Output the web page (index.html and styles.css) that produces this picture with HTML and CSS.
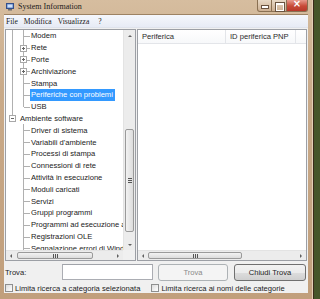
FILE: index.html
```html
<!DOCTYPE html>
<html lang="it">
<head>
	<meta charset="UTF-8" />
	<title>System Information</title>
	<link rel="stylesheet" href="styles.css">
</head>
<body>

<div class="window">

	<!-- barra del titolo -->
	<div class="titlebar">
		<svg class="app-icon" width="8" height="8" viewBox="0 0 8 8">
			<rect x="0.5" y="0.5" width="7" height="5" fill="#5b86c8" stroke="#34508a"/>
			<rect x="1.5" y="1.5" width="5" height="3" fill="#cfe0f7"/>
			<rect x="2" y="6" width="4" height="1.5" fill="#6d6d6d"/>
		</svg>
		<span class="title">System Information</span>
		<div class="controls">
			<span class="ctl min"></span>
			<span class="ctl max"></span>
			<span class="ctl close"></span>
		</div>
	</div>

	<div class="client">
		<div class="menubar">
			<span>File</span>
			<span>Modifica</span>
			<span>Visualizza</span>
			<span>?</span>
		</div>

		<div class="panes">
			<!-- albero delle categorie -->
			<div class="tree-pane">
				<div class="tree">
					<div class="row"><i class="g0 v"></i><i class="g1 tee"></i><span class="label">Modem</span></div>
					<div class="row"><i class="g0 v"></i><i class="g1 tee"><b class="box plus"></b></i><span class="label">Rete</span></div>
					<div class="row"><i class="g0 v"></i><i class="g1 tee"><b class="box plus"></b></i><span class="label">Porte</span></div>
					<div class="row"><i class="g0 v"></i><i class="g1 tee"><b class="box plus"></b></i><span class="label">Archiviazione</span></div>
					<div class="row"><i class="g0 v"></i><i class="g1 tee"></i><span class="label">Stampa</span></div>
					<div class="row"><i class="g0 v"></i><i class="g1 tee"></i><span class="label selected">Periferiche con problemi</span></div>
					<div class="row"><i class="g0 v"></i><i class="g1 ell"></i><span class="label">USB</span></div>
					<div class="row"><i class="g0 top"><b class="box minus"></b></i><span class="label root">Ambiente software</span></div>
					<div class="row"><i class="g0"></i><i class="g1 tee"></i><span class="label">Driver di sistema</span></div>
					<div class="row"><i class="g0"></i><i class="g1 tee"></i><span class="label">Variabili d'ambiente</span></div>
					<div class="row"><i class="g0"></i><i class="g1 tee"></i><span class="label">Processi di stampa</span></div>
					<div class="row"><i class="g0"></i><i class="g1 tee"></i><span class="label">Connessioni di rete</span></div>
					<div class="row"><i class="g0"></i><i class="g1 tee"></i><span class="label">Attività in esecuzione</span></div>
					<div class="row"><i class="g0"></i><i class="g1 tee"></i><span class="label">Moduli caricati</span></div>
					<div class="row"><i class="g0"></i><i class="g1 tee"></i><span class="label">Servizi</span></div>
					<div class="row"><i class="g0"></i><i class="g1 tee"></i><span class="label">Gruppi programmi</span></div>
					<div class="row"><i class="g0"></i><i class="g1 tee"></i><span class="label">Programmi ad esecuzione automatica</span></div>
					<div class="row"><i class="g0"></i><i class="g1 tee"></i><span class="label">Registrazioni OLE</span></div>
					<div class="row"><i class="g0"></i><i class="g1 tee"></i><span class="label">Segnalazione errori di Windows</span></div>
				</div>

				<div class="vscroll">
					<span class="arrow up"></span>
					<span class="vtrack">
						<span class="vthumb"><span class="grip-h"></span></span>
					</span>
					<span class="arrow down"></span>
				</div>

				<div class="hscroll">
					<span class="arrow left"></span>
					<span class="htrack">
						<span class="hthumb tree-thumb"><span class="grip-v"></span></span>
					</span>
					<span class="arrow right"></span>
				</div>
				<div class="corner"></div>
			</div>

			<!-- elenco periferiche -->
			<div class="list-pane">
				<div class="list-header">
					<span class="col col-name">Periferica</span>
					<span class="col col-id">ID periferica PNP</span>
				</div>
				<div class="list-body"></div>
				<div class="hscroll">
					<span class="arrow left"></span>
					<span class="htrack">
						<span class="hthumb list-thumb"><span class="grip-v"></span></span>
					</span>
					<span class="arrow right"></span>
				</div>
			</div>
		</div>

		<div class="find-row">
			<label class="find-label" for="find">Trova:</label>
			<input class="find-input" id="find" type="text">
			<button class="btn" type="button" disabled>Trova</button>
			<button class="btn" type="button">Chiudi Trova</button>
		</div>

		<div class="check-row">
			<label class="check"><span class="checkbox"></span>Limita ricerca a categoria selezionata</label>
			<label class="check"><span class="checkbox"></span>Limita ricerca ai nomi delle categorie</label>
		</div>
	</div>
</div>

</body>
</html>
```

FILE: styles.css
```css
* {
	box-sizing: border-box;
}

body {
	margin: 0;
	width: 320px;
	height: 299px;
	overflow: hidden;
	background: linear-gradient(90deg, #2e3a1b, #46562a);
	font-family: 'Liberation Sans', Arial, sans-serif;
	font-size: 7.6px;
	color: #1e1e1e;
}

/* cornice della finestra */
.window {
	width: 314px;
	height: 299px;
	display: flex;
	flex-direction: column;
	padding: 0 5px 6px 4px;
	background: linear-gradient(180deg, #d6bd9f 0%, #c9aa89 30%, #c19f7c 100%);
	border-right: 1px solid #3b2c1a;
	box-shadow: inset -1px 0 0 #e2cfb6;
}

.titlebar {
	height: 14px;
	display: flex;
	align-items: center;
	margin-left: -1px;
}

.app-icon {
	margin-right: 4px;
	margin-left: 3px;
}

.title {
	font-family: 'Liberation Serif', 'Times New Roman', serif;
	font-size: 8px;
	color: #1a1a1a;
	margin-top: -1px;
}

.controls {
	margin-left: auto;
	margin-right: 0;
	align-self: flex-start;
	display: flex;
}

.ctl {
	display: block;
	height: 12px;
	border: 1px solid #8a7052;
	border-top: none;
	position: relative;
}

.ctl.min {
	width: 15px;
	border-radius: 0 0 0 3px;
	background: linear-gradient(#e8d9c6, #cdb092);
}

.ctl.max {
	width: 15px;
	border-left: none;
	background: linear-gradient(#e8d9c6, #cdb092);
}

.ctl.close {
	width: 21px;
	border-left: none;
	border-radius: 0 0 3px 0;
	background: linear-gradient(#e79a8c, #c74a37 55%, #b8382a);
}

.ctl.min::after {
	content: '';
	position: absolute;
	left: 4px;
	top: 6px;
	width: 6px;
	height: 2px;
	background: #fff;
	box-shadow: 0 0 0 1px #6a5440;
}

.ctl.max::after {
	content: '';
	position: absolute;
	left: 4px;
	top: 3px;
	width: 6px;
	height: 5px;
	border: 1px solid #fff;
	border-top-width: 2px;
	box-shadow: 0 0 0 1px #6a5440;
}

.ctl.close::after {
	content: '×';
	position: absolute;
	left: 0;
	right: 0;
	top: -2px;
	text-align: center;
	font-family: 'DejaVu Sans', sans-serif;
	font-weight: bold;
	font-size: 10px;
	color: #fff;
}

/* area client */
.client {
	flex: 1;
	display: flex;
	flex-direction: column;
	background: #f0f0f0;
	border-top: 1px solid #9d8263;
}

.menubar {
	height: 13px;
	display: flex;
	align-items: center;
	padding-left: 2px;
	gap: 6px;
	background: linear-gradient(#f5f7fc, #e7ebf5);
	border-bottom: 1px solid #dfe3ec;
	font-family: 'Liberation Serif', 'Times New Roman', serif;
	font-size: 7.6px;
	color: #1a1a1a;
}

.menubar span:last-child {
	margin-left: 3px;
}

.panes {
	height: 232px;
	display: flex;
	gap: 1px;
	padding: 0 1px;
	margin-top: 1px;
}

.tree-pane {
	width: 131px;
	display: grid;
	grid-template-columns: 1fr 12px;
	grid-template-rows: 1fr 10px;
	background: #fff;
	border: 1px solid #9c9fa5;
	overflow: hidden;
}

.tree {
	overflow: hidden;
	white-space: nowrap;
}

.row {
	height: 11.8px;
	display: flex;
	align-items: stretch;
}

.row i {
	display: flex;
	align-items: center;
	flex: none;
}

.g0 {
	width: 11px;
	margin-left: 1px;
}

.g1 {
	width: 12px;
}

/* linee dell'albero */
.v {
	background: linear-gradient(#b0b0b0, #b0b0b0) 5px 0 / 1px 100% no-repeat;
}

.top {
	background: linear-gradient(#b0b0b0, #b0b0b0) 5px 0 / 1px 50% no-repeat;
}

.tee {
	background:
		linear-gradient(#b0b0b0, #b0b0b0) 5px 0 / 1px 100% no-repeat,
		linear-gradient(#b0b0b0, #b0b0b0) 6px 6px / 6px 1px no-repeat;
}

.ell {
	background:
		linear-gradient(#b0b0b0, #b0b0b0) 5px 0 / 1px 6px no-repeat,
		linear-gradient(#b0b0b0, #b0b0b0) 6px 6px / 6px 1px no-repeat;
}

.box {
	display: block;
	width: 7px;
	height: 7px;
	margin-left: 2px;
	margin-top: 1px;
	border: 1px solid #a8a8a8;
	background:
		linear-gradient(#666, #666) 1px 2px / 3px 1px no-repeat,
		#fff;
}

.box.plus {
	background:
		linear-gradient(#666, #666) 1px 2px / 3px 1px no-repeat,
		linear-gradient(#666, #666) 2px 1px / 1px 3px no-repeat,
		#fff;
}

.label {
	display: flex;
	align-items: center;
	padding: 0 1px;
	color: #222;
}

.label.root {
	margin-left: 1px;
}

.label.selected {
	background: #3399ff;
	color: #fff;
	padding-right: 2px;
}

/* barre di scorrimento */
.vscroll {
	display: flex;
	flex-direction: column;
	background: #ececec;
	border-left: 1px solid #e3e3e3;
}

.arrow {
	flex: none;
	display: block;
	width: 11px;
	height: 11px;
	position: relative;
}

.arrow::after {
	content: '';
	position: absolute;
	left: 50%;
	top: 50%;
	width: 0;
	height: 0;
	border: 2px solid transparent;
}

.arrow.up::after {
	margin: -3px 0 0 -2px;
	border-bottom: 2px solid #606060;
}

.arrow.down::after {
	margin: -1px 0 0 -2px;
	border-top: 2px solid #606060;
}

.arrow.left::after {
	margin: -2px 0 0 -3px;
	border-right: 2px solid #606060;
}

.arrow.right::after {
	margin: -2px 0 0 -1px;
	border-left: 2px solid #606060;
}

.vtrack {
	flex: 1;
	display: flex;
	flex-direction: column;
	padding-top: 88px;
	padding-bottom: 7px;
}

.vthumb {
	flex: 1;
	margin: 0 1px;
	display: flex;
	align-items: center;
	justify-content: center;
	border: 1px solid #9a9a9a;
	border-radius: 2px;
	background: linear-gradient(90deg, #f2f2f2, #dcdcdc);
}

.grip-h {
	width: 4px;
	height: 5px;
	background: repeating-linear-gradient(#555 0 1px, transparent 1px 2px);
}

.hscroll {
	display: flex;
	align-items: stretch;
	background: #ececec;
	border-top: 1px solid #e3e3e3;
	height: 10px;
}

.hscroll .arrow {
	height: auto;
	width: 10px;
}

.htrack {
	flex: 1;
	display: flex;
}

.hthumb {
	margin: 1px 0;
	display: flex;
	align-items: center;
	justify-content: center;
	border: 1px solid #9a9a9a;
	border-radius: 2px;
	background: linear-gradient(#f2f2f2, #dcdcdc);
}

.tree-thumb {
	width: 76px;
	margin-left: 1px;
}

.list-thumb {
	width: 94px;
}

.grip-v {
	width: 5px;
	height: 4px;
	background: repeating-linear-gradient(90deg, #555 0 1px, transparent 1px 2px);
}

.corner {
	background: #f0f0f0;
}

.list-pane {
	flex: 1;
	display: flex;
	flex-direction: column;
	background: #fff;
	border: 1px solid #9c9fa5;
}

.list-header {
	height: 14px;
	display: flex;
	align-items: center;
	background: linear-gradient(#fff, #f7f8fa);
	border-bottom: 1px solid #e3e5e9;
	color: #2a2a2a;
}

.col {
	height: 100%;
	display: flex;
	align-items: center;
	padding-left: 4px;
	border-right: 1px solid #e3e5e9;
}

.col-name {
	width: 88px;
}

.col-id {
	width: 70px;
}

.list-body {
	flex: 1;
}

/* riga di ricerca */
.find-row {
	height: 22px;
	display: flex;
	align-items: center;
	padding: 0 1px;
}

.find-label {
	width: 57px;
	color: #222;
}

.find-input {
	width: 91px;
	height: 16px;
	margin: 0;
	border: 1px solid #abadb3;
	border-top-color: #a0a3a9;
	background: #fff;
	outline: none;
}

.btn {
	height: 17px;
	margin-left: 5px;
	padding: 0;
	font-family: inherit;
	font-size: 7.6px;
	color: #1e1e1e;
	border: 1px solid #707070;
	border-radius: 3px;
	background: linear-gradient(#f2f2f2 0%, #ebebeb 50%, #dddddd 51%, #cfcfcf 100%);
}

.btn:first-of-type {
	width: 70px;
}

.btn:last-of-type {
	width: 72px;
	margin-left: 6px;
}

.btn:disabled {
	color: #8a8a8a;
	border-color: #adb2b5;
	background: #f4f4f4;
}

.check-row {
	flex: 1;
	display: flex;
	align-items: center;
	padding-left: 1px;
}

.check {
	display: flex;
	align-items: center;
	color: #222;
}

.check:last-child {
	margin-left: 11px;
}

.checkbox {
	width: 8px;
	height: 8px;
	margin-right: 2px;
	border: 1px solid #8e8f8f;
	background: linear-gradient(135deg, #dcdcdc, #fff);
}
```
